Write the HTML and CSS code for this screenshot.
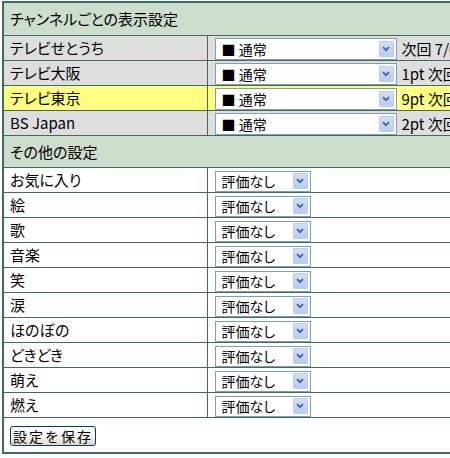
FILE: index.html
```html
<!DOCTYPE html>
<html lang="ja">
<head>
<meta charset="utf-8">
<link rel="stylesheet" href="styles.css">
</head>
<body>
<div class="viewport">
<table class="settings">
  <colgroup><col class="c1"><col class="c2"></colgroup>
  <tr><th colspan="2" class="sec-head first">チャンネルごとの表示設定</th></tr>
  <tr class="ch">
    <td class="name">テレビせとうち</td>
    <td class="ctl"><div class="sel wide"><span class="val">■ 通常</span><span class="btn"><svg viewBox="0 0 8 6" width="8" height="6"><path d="M1 1.2 L4 4.2 L7 1.2" fill="none" stroke="#4d6185" stroke-width="1.8"/></svg></span></div><span class="info">次回 7/08 放送予定</span></td>
  </tr>
  <tr class="ch">
    <td class="name">テレビ大阪</td>
    <td class="ctl"><div class="sel wide"><span class="val">■ 通常</span><span class="btn"><svg viewBox="0 0 8 6" width="8" height="6"><path d="M1 1.2 L4 4.2 L7 1.2" fill="none" stroke="#4d6185" stroke-width="1.8"/></svg></span></div><span class="info">1pt 次回 7/08 放送予定</span></td>
  </tr>
  <tr class="ch hl">
    <td class="name">テレビ東京</td>
    <td class="ctl"><div class="sel wide"><span class="val">■ 通常</span><span class="btn"><svg viewBox="0 0 8 6" width="8" height="6"><path d="M1 1.2 L4 4.2 L7 1.2" fill="none" stroke="#4d6185" stroke-width="1.8"/></svg></span></div><span class="info">9pt 次回 7/08 放送予定</span></td>
  </tr>
  <tr class="ch">
    <td class="name">BS Japan</td>
    <td class="ctl"><div class="sel wide"><span class="val">■ 通常</span><span class="btn"><svg viewBox="0 0 8 6" width="8" height="6"><path d="M1 1.2 L4 4.2 L7 1.2" fill="none" stroke="#4d6185" stroke-width="1.8"/></svg></span></div><span class="info">2pt 次回 7/08 放送予定</span></td>
  </tr>
  <tr><th colspan="2" class="sec-head">その他の設定</th></tr>
  <tr class="ot"><td class="name">お気に入り</td><td class="ctl"><div class="sel narrow"><span class="val">評価なし</span><span class="btn"><svg viewBox="0 0 8 6" width="8" height="6"><path d="M1 1.2 L4 4.2 L7 1.2" fill="none" stroke="#4d6185" stroke-width="1.8"/></svg></span></div></td></tr>
  <tr class="ot"><td class="name">絵</td><td class="ctl"><div class="sel narrow"><span class="val">評価なし</span><span class="btn"><svg viewBox="0 0 8 6" width="8" height="6"><path d="M1 1.2 L4 4.2 L7 1.2" fill="none" stroke="#4d6185" stroke-width="1.8"/></svg></span></div></td></tr>
  <tr class="ot"><td class="name">歌</td><td class="ctl"><div class="sel narrow"><span class="val">評価なし</span><span class="btn"><svg viewBox="0 0 8 6" width="8" height="6"><path d="M1 1.2 L4 4.2 L7 1.2" fill="none" stroke="#4d6185" stroke-width="1.8"/></svg></span></div></td></tr>
  <tr class="ot"><td class="name">音楽</td><td class="ctl"><div class="sel narrow"><span class="val">評価なし</span><span class="btn"><svg viewBox="0 0 8 6" width="8" height="6"><path d="M1 1.2 L4 4.2 L7 1.2" fill="none" stroke="#4d6185" stroke-width="1.8"/></svg></span></div></td></tr>
  <tr class="ot"><td class="name">笑</td><td class="ctl"><div class="sel narrow"><span class="val">評価なし</span><span class="btn"><svg viewBox="0 0 8 6" width="8" height="6"><path d="M1 1.2 L4 4.2 L7 1.2" fill="none" stroke="#4d6185" stroke-width="1.8"/></svg></span></div></td></tr>
  <tr class="ot"><td class="name">涙</td><td class="ctl"><div class="sel narrow"><span class="val">評価なし</span><span class="btn"><svg viewBox="0 0 8 6" width="8" height="6"><path d="M1 1.2 L4 4.2 L7 1.2" fill="none" stroke="#4d6185" stroke-width="1.8"/></svg></span></div></td></tr>
  <tr class="ot"><td class="name">ほのぼの</td><td class="ctl"><div class="sel narrow"><span class="val">評価なし</span><span class="btn"><svg viewBox="0 0 8 6" width="8" height="6"><path d="M1 1.2 L4 4.2 L7 1.2" fill="none" stroke="#4d6185" stroke-width="1.8"/></svg></span></div></td></tr>
  <tr class="ot"><td class="name">どきどき</td><td class="ctl"><div class="sel narrow"><span class="val">評価なし</span><span class="btn"><svg viewBox="0 0 8 6" width="8" height="6"><path d="M1 1.2 L4 4.2 L7 1.2" fill="none" stroke="#4d6185" stroke-width="1.8"/></svg></span></div></td></tr>
  <tr class="ot"><td class="name">萌え</td><td class="ctl"><div class="sel narrow"><span class="val">評価なし</span><span class="btn"><svg viewBox="0 0 8 6" width="8" height="6"><path d="M1 1.2 L4 4.2 L7 1.2" fill="none" stroke="#4d6185" stroke-width="1.8"/></svg></span></div></td></tr>
  <tr class="ot"><td class="name">燃え</td><td class="ctl"><div class="sel narrow"><span class="val">評価なし</span><span class="btn"><svg viewBox="0 0 8 6" width="8" height="6"><path d="M1 1.2 L4 4.2 L7 1.2" fill="none" stroke="#4d6185" stroke-width="1.8"/></svg></span></div></td></tr>
  <tr class="foot"><td colspan="2"><button class="save" type="button">設定を保存</button></td></tr>
</table>
</div>
</body>
</html>
```

FILE: styles.css
```css
html, body {
  margin: 0;
  padding: 0;
  background: #ffffff;
}
body {
  font-family: "Noto Sans CJK JP", "Liberation Sans", sans-serif;
  font-size: 15px;
  color: #000000;
  font-feature-settings: "palt";
}
.viewport {
  width: 450px;
  height: 458px;
  overflow: hidden;
  padding: 1px 0 0 2px;
  box-sizing: border-box;
}
.settings {
  border-collapse: collapse;
  width: 620px;
  border: 2px solid #3d6e5c;
  table-layout: fixed;
}
.c1 {
  width: 204px;
}
.c2 {
  width: 416px;
}
.settings td, .settings th {
  border: 1px solid #3d6e5c;
  padding: 0;
  white-space: nowrap;
  vertical-align: middle;
  overflow: hidden;
}
.sec-head {
  background: #cddecd;
  text-align: left;
  font-weight: normal;
  height: 31px;
  padding-left: 6px !important;
  font-size: 15px;
  line-height: 20px;
}
.sec-head.first {
  height: 32px;
}
.name {
  padding-left: 6px !important;
  height: 24px;
  line-height: 18px;
}
.ch td {
  background: #dedede;
}
.ch.hl td {
  background: #ffff80;
}
.ot td {
  background: #ffffff;
}
.ctl {
  padding-left: 7px !important;
  height: 24px;
}
.ctl > * {
  vertical-align: middle;
}
.sel {
  display: inline-flex;
  align-items: center;
  justify-content: space-between;
  box-sizing: border-box;
  border: 1px solid #7f9db9;
  background: #ffffff;
  padding: 0 2px 0 6px;
  font-size: 14px;
}
.sel.wide {
  width: 182px;
  height: 22px;
}
.sel.narrow {
  width: 96px;
  height: 21px;
}
.val {
  line-height: 16px;
}
.btn {
  display: flex;
  align-items: center;
  justify-content: center;
  width: 15px;
  height: 16px;
  box-sizing: border-box;
  border: 1px solid #bacdf5;
  border-radius: 1px;
  background: linear-gradient(#d2dffd, #b6cbf7);
}
.info {
  display: inline-block;
  margin-left: 5px;
  line-height: 18px;
}
.foot td {
  height: 34px;
  padding-left: 6px !important;
  background: #ffffff;
  vertical-align: top;
}
.save {
  margin-top: 8px;
  width: 86px;
  height: 20px;
  padding: 0;
  font-family: "Noto Sans CJK JP", "Liberation Sans", sans-serif;
  font-size: 14px;
  letter-spacing: 2px;
  line-height: 16px;
  border: 1px solid #003c74;
  border-radius: 3px;
  background: linear-gradient(#ffffff, #f3f2ec 60%, #dcd9ca);
  color: #000000;
}
```
